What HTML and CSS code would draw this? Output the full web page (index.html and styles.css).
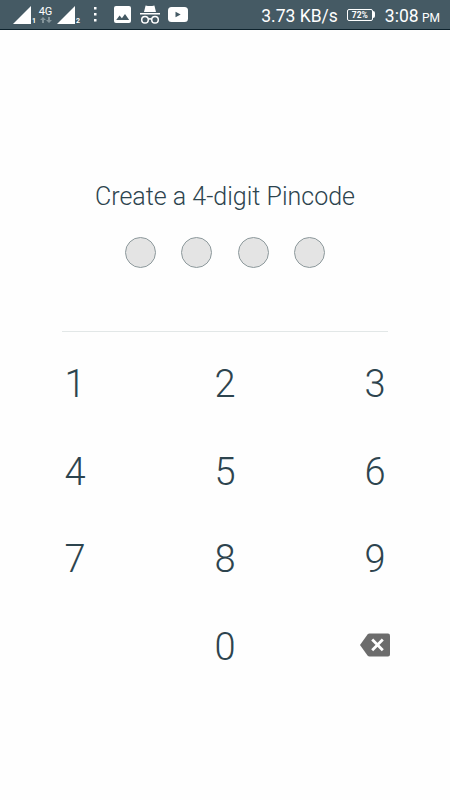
FILE: index.html
```
<!DOCTYPE html>
<html lang="en">
<head>
  <meta charset="UTF-8" />
  <meta name="viewport" content="width=device-width, initial-scale=1.0"/>
  <title>Create Pincode</title>
  <link rel="stylesheet" href="styles.css">
</head>
<body>

  <header class="status-bar">
    <div class="status-left">
      <svg class="signal" width="18" height="18" viewBox="0 0 18 18"><path d="M0 18L18 0v18z" fill="#fff"/></svg>
      <span class="sim">1</span>
      <div class="network">
        <span class="network-type">4G</span>
        <svg width="12" height="6" viewBox="0 0 12 6" fill="#84949a"><path d="M3 0l3 3H4v3H2V3H0zM9 6L6 3h2V0h2v3h2z"/></svg>
      </div>
      <svg class="signal" width="18" height="18" viewBox="0 0 18 18"><path d="M0 18L18 0v18z" fill="#fff"/></svg>
      <span class="sim">2</span>
      <svg class="dots" width="3" height="15" viewBox="0 0 3 15" fill="#fff"><path d="M0 0h2.5v2.5H0zM0 6h2.5v2.5H0zM0 12h2.5v2.5H0z"/></svg>
      <svg class="picture" width="17" height="17" viewBox="0 0 17 17"><rect width="17" height="17" rx="2" fill="#fff"/><path d="M2.2 14l3.4-4.6 2.3 2.8L11 8l4.2 6z" fill="#455a64"/></svg>
      <svg class="incognito" width="20" height="19" viewBox="0 0 20 19">
        <path d="M5.6 0.5q4.4 1 8.8 0L16 7H4zM0 8h20v1.6H0z" fill="#fff"/>
        <g fill="none" stroke="#fff" stroke-width="1.5"><circle cx="5" cy="14.7" r="3.3"/><circle cx="15" cy="14.7" r="3.3"/><path d="M8.2 14.3q1.8-1.2 3.6 0"/></g>
      </svg>
      <svg class="video" width="20" height="15" viewBox="0 0 20 15"><rect width="20" height="15" rx="3.5" fill="#fff"/><path d="M7.5 4.8v5.4l5.2-2.7z" fill="#455a64"/></svg>
    </div>
    <div class="status-right">
      <span class="speed">3.73 KB/s</span>
      <div class="battery"><span class="battery-level">72%</span></div>
      <span class="time">3:08 <span class="period">PM</span></span>
    </div>
  </header>

  <main class="pin-screen">
    <h1 class="title">Create a 4-digit Pincode</h1>
    <div class="pin-dots">
      <span class="pin-dot"></span>
      <span class="pin-dot"></span>
      <span class="pin-dot"></span>
      <span class="pin-dot"></span>
    </div>
    <hr class="divider">
    <div class="keypad">
      <button class="key">1</button>
      <button class="key">2</button>
      <button class="key">3</button>
      <button class="key">4</button>
      <button class="key">5</button>
      <button class="key">6</button>
      <button class="key">7</button>
      <button class="key">8</button>
      <button class="key">9</button>
      <button class="key key--zero">0</button>
      <button class="key key--delete" aria-label="Delete">
        <svg width="30" height="24" viewBox="0 0 30 24">
          <path d="M7.5 1.6Q8.3.5 9.6.5H28Q30 .5 30 2.5v19q0 2-2 2H9.6q-1.3 0-2.1-1.1L0 12z" fill="#6c6c6c"/>
          <path d="M12.2 6.6l10.6 10.6M22.8 6.6L12.2 17.2" stroke="#fff" stroke-width="2.8"/>
        </svg>
      </button>
    </div>
  </main>

</body>
</html>
```

FILE: styles.css
```
* {
  box-sizing: border-box;
}

body {
  margin: 0;
  height: 100vh;
  overflow: hidden;
  background: #fefefe;
  font-family: Roboto, "Liberation Sans", sans-serif;
  color: #2d444e;
}

.status-bar {
  display: flex;
  justify-content: space-between;
  height: 30px;
  padding: 0 10px 0 13px;
  background: #455a64;
  border-bottom: 1px solid #0d222c;
  color: #fff;
}

.status-left,
.status-right {
  display: flex;
  align-items: center;
}

.signal {
  margin-top: 1px;
}

.sim {
  width: 5px;
  margin-left: 1px;
  padding-top: 13px;
  font-size: 7px;
  font-weight: 700;
  line-height: 8px;
}

.network {
  display: flex;
  flex-direction: column;
  align-items: center;
  width: 15px;
  margin: 0 4px 0 1px;
}

.network-type {
  font-size: 11px;
  line-height: 11px;
}

.dots {
  margin-left: 13px;
}

.picture {
  margin-left: 17px;
}

.incognito {
  margin-left: 9px;
}

.video {
  margin-left: 8px;
}

.speed {
  padding-top: 2px;
  font-size: 17.5px;
}

.battery {
  display: flex;
  align-items: center;
  margin-left: 9px;
}

.battery-level {
  width: 26px;
  height: 12px;
  border: 1px solid #fff;
  border-radius: 2px;
  font-size: 8.5px;
  font-weight: 700;
  line-height: 11px;
  text-align: center;
}

.battery::after {
  content: "";
  width: 2px;
  height: 7px;
  background: #fff;
  border-radius: 0 2px 2px 0;
}

.time {
  margin-left: 10px;
  padding-top: 2px;
  font-size: 17.5px;
}

.period {
  margin-left: -1px;
  font-size: 12px;
}

.pin-screen {
  display: flex;
  flex-direction: column;
  align-items: center;
  padding-top: 151px;
}

.title {
  margin: 0;
  font-size: 25px;
  font-weight: 300;
  line-height: 32px;
}

.pin-dots {
  display: flex;
  gap: 25.3px;
  margin-top: 24px;
}

.pin-dot {
  width: 31px;
  height: 31px;
  background: #e4e4e4;
  border: 1px solid #8d999c;
  border-radius: 50%;
}

.divider {
  width: 326px;
  height: 1px;
  margin: 63px 0 0;
  border: none;
  background: #e2e7e7;
}

.keypad {
  display: grid;
  grid-template-columns: repeat(3, 150px);
  grid-auto-rows: 87.5px;
  margin-top: 8.5px;
}

.key {
  display: flex;
  justify-content: center;
  align-items: center;
  padding: 0;
  border: none;
  background: none;
  color: inherit;
  font-family: inherit;
  font-size: 38px;
  font-weight: 300;
  cursor: pointer;
}

.key--zero {
  grid-column: 2;
}

.key--delete {
  padding-bottom: 4px;
}
```
